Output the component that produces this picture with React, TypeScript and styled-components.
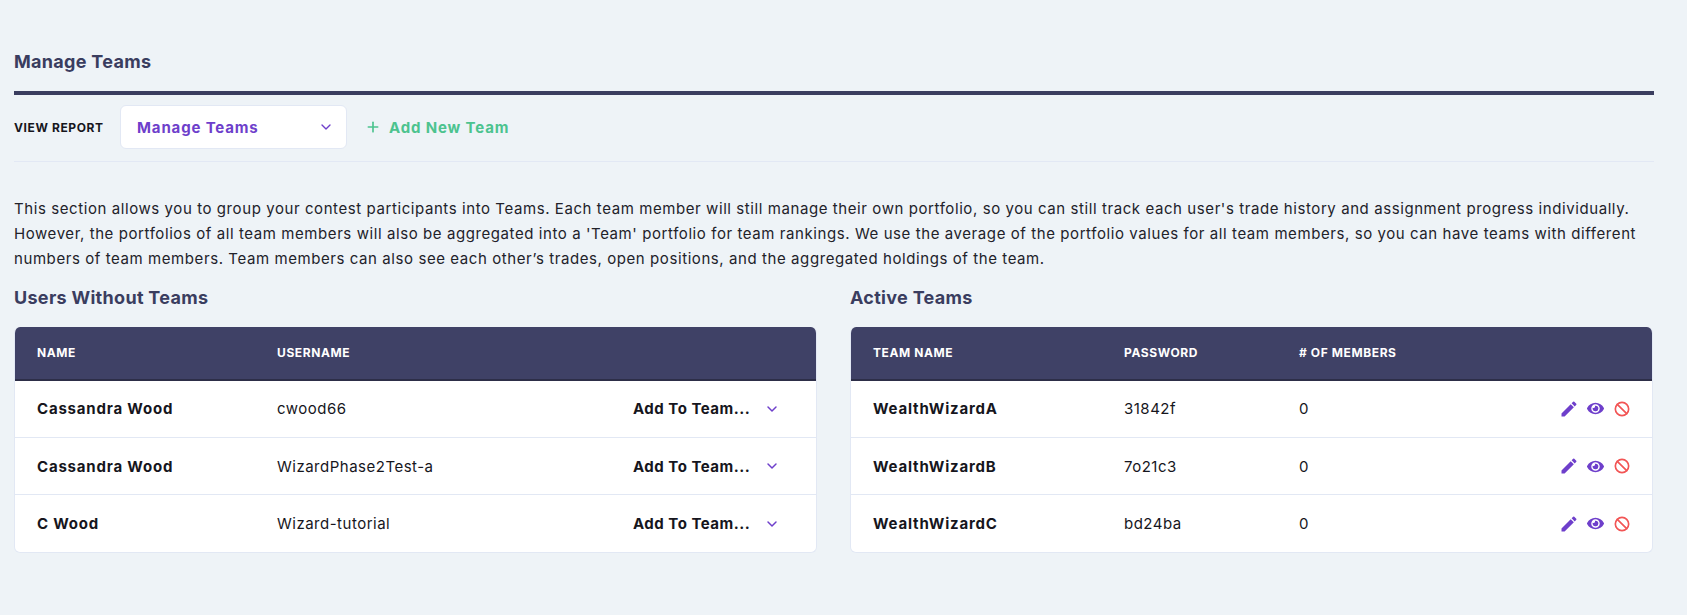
import { ChevronDown, Plus, Ban } from 'lucide-react'
import { FaEye } from 'react-icons/fa'
import { MdEdit } from 'react-icons/md'
import styled, { createGlobalStyle } from 'styled-components'

const GlobalStyle = createGlobalStyle`
    html, body {
        margin: 0;
        background-color: #EEF3F7;
    }
    body {
        font-family: 'Inter', 'Liberation Sans', sans-serif;
        color: #16161D;
    }
`;

const Page = styled.div`
    box-sizing: border-box;
    width: 1654px;
    height: 615px;
    padding: 49px 0 0 14px;
`;

const Title = styled.h1`
    margin: 0;
    height: 42px;
    font-size: 18px;
    line-height: 26px;
    font-weight: 700;
    letter-spacing: 0.3px;
    color: #3A3D5F;
`;

const Rule = styled.div`
    height: 4px;
    background-color: #3A3D5F;
`;

const Toolbar = styled.div`
    box-sizing: border-box;
    display: flex;
    align-items: center;
    height: 67px;
    padding-bottom: 2px;
    border-bottom: 1px solid #E2E8F4;
`;

const ToolbarLabel = styled.span`
    width: 106px;
    font-size: 12px;
    font-weight: 700;
    letter-spacing: 0.6px;
`;

const Select = styled.div`
    box-sizing: border-box;
    width: 227px;
    height: 44px;
    display: flex;
    align-items: center;
    justify-content: space-between;
    padding: 0 12px 0 16px;
    background-color: #FFFFFF;
    border: 1px solid #E2E8F4;
    border-radius: 6px;
    font-size: 15px;
    font-weight: 700;
    letter-spacing: 0.85px;
    color: #6E3FCB;
`;

const AddLink = styled.a`
    display: flex;
    align-items: center;
    gap: 8px;
    margin-left: 18px;
    font-size: 15px;
    font-weight: 700;
    letter-spacing: 0.85px;
    color: #4CC38F;
`;

const Description = styled.p`
    margin: 34px 0 0;
    font-size: 15px;
    line-height: 25.2px;
    letter-spacing: 0.58px;
    white-space: nowrap;
    color: #22222A;
`;

const Columns = styled.div`
    display: grid;
    grid-template-columns: 803px 803px;
    gap: 33px;
    margin-top: 13px;
`;

const SectionTitle = styled.h2`
    margin: 0 0 16px;
    font-size: 18px;
    line-height: 26px;
    font-weight: 700;
    letter-spacing: 0.3px;
    color: #3A3D5F;
`;

const Table = styled.div`
    background-color: #FFFFFF;
    border: 1px solid #E2E8F4;
    border-top: none;
    border-radius: 6px;
    overflow: hidden;
`;

const Row = styled.div<{ $columns: string }>`
    display: grid;
    grid-template-columns: ${(p) => p.$columns};
    align-items: center;
    height: 56.4px;
    padding: 0 22px;
    font-size: 15px;
    letter-spacing: 0.5px;
    border-bottom: 1px solid #E2E8F4;

    &:last-child {
        border-bottom: none;
    }
`;

const HeadRow = styled(Row)`
    height: 52px;
    margin: 0 -1px;
    padding: 0 23px;
    background-color: #3F4166;
    border-bottom: 2px solid #2D2E48;
    color: #FFFFFF;
    font-size: 12px;
    font-weight: 700;
    letter-spacing: 0.6px;
`;

const Strong = styled.span`
    font-weight: 700;
    letter-spacing: 0.8px;
`;

const AddToTeam = styled.div`
    display: flex;
    align-items: center;
    gap: 14px;
    font-weight: 700;
    color: #16161D;

    svg {
        color: #6E3FCB;
    }
`;

const Actions = styled.div`
    display: flex;
    align-items: center;
    justify-content: flex-end;
    gap: 10px;
    color: #6E3FCB;

    svg:first-child {
        margin-right: -2px;
    }
`;

const users = [
    { name: 'Cassandra Wood', username: 'cwood66' },
    { name: 'Cassandra Wood', username: 'WizardPhase2Test-a' },
    { name: 'C Wood', username: 'Wizard-tutorial' },
];

const teams = [
    { name: 'WealthWizardA', password: '31842f', members: 0 },
    { name: 'WealthWizardB', password: '7o21c3', members: 0 },
    { name: 'WealthWizardC', password: 'bd24ba', members: 0 },
];

const userColumns = '240px 356px 1fr';
const teamColumns = '251px 175px 1fr 100px';

const App = () => {
    return (
        <Page>
            <GlobalStyle />
            <Title>Manage Teams</Title>
            <Rule />
            <Toolbar>
                <ToolbarLabel>VIEW REPORT</ToolbarLabel>
                <Select>
                    Manage Teams
                    <ChevronDown size={16} />
                </Select>
                <AddLink>
                    <Plus size={16} strokeWidth={2.5} />
                    Add New Team
                </AddLink>
            </Toolbar>
            <Description>
                This section allows you to group your contest participants into Teams. Each team member will still manage their own portfolio, so you can still track each user's trade history and assignment progress individually.
                <br />
                However, the portfolios of all team members will also be aggregated into a 'Team' portfolio for team rankings. We use the average of the portfolio values for all team members, so you can have teams with different
                <br />
                numbers of team members. Team members can also see each other’s trades, open positions, and the aggregated holdings of the team.
            </Description>
            <Columns>
                <div>
                    <SectionTitle>Users Without Teams</SectionTitle>
                    <Table>
                        <HeadRow $columns={userColumns}>
                            <span>NAME</span>
                            <span>USERNAME</span>
                            <span />
                        </HeadRow>
                        {users.map((user) => (
                            <Row $columns={userColumns} key={user.username}>
                                <Strong>{user.name}</Strong>
                                <span>{user.username}</span>
                                <AddToTeam>
                                    Add To Team...
                                    <ChevronDown size={16} strokeWidth={2.2} />
                                </AddToTeam>
                            </Row>
                        ))}
                    </Table>
                </div>
                <div>
                    <SectionTitle>Active Teams</SectionTitle>
                    <Table>
                        <HeadRow $columns={teamColumns}>
                            <span>TEAM NAME</span>
                            <span>PASSWORD</span>
                            <span># OF MEMBERS</span>
                            <span />
                        </HeadRow>
                        {teams.map((team) => (
                            <Row $columns={teamColumns} key={team.name}>
                                <Strong>{team.name}</Strong>
                                <span>{team.password}</span>
                                <span>{team.members}</span>
                                <Actions>
                                    <MdEdit size={20} />
                                    <FaEye size={17} />
                                    <Ban size={16} strokeWidth={2.5} color="#F25555" />
                                </Actions>
                            </Row>
                        ))}
                    </Table>
                </div>
            </Columns>
        </Page>
    )
}

export default App
